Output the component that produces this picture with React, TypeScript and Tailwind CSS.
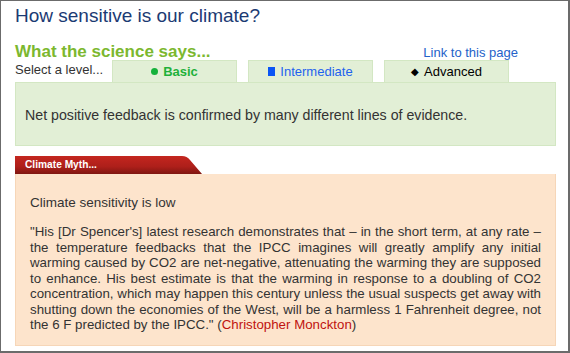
import React from 'react';

/* ===============================
    Level tabs
================================ */
function LevelTab({ children }: { children: React.ReactNode }) {
  return (
    <div className="flex h-[22px] w-[125px] items-center justify-center border border-b-0 border-[#d3e7c3] bg-[#e2efd6] text-[13px]">
      {children}
    </div>
  );
}

/* ===============================
    Red "Climate Myth" banner
================================ */
function MythBanner() {
  return (
    <div className="relative h-[18px] w-[187px]">
      <svg
        className="absolute inset-0"
        width="187"
        height="18"
        viewBox="0 0 187 18"
      >
        <defs>
          <linearGradient id="myth" x1="0" y1="0" x2="0" y2="1">
            <stop offset="0" stopColor="#c4261f" />
            <stop offset="0.6" stopColor="#ad1f1a" />
            <stop offset="1" stopColor="#7f1611" />
          </linearGradient>
        </defs>
        <path d="M0 0 H167 Q172 0 175 4 L187 18 H0 Z" fill="url(#myth)" />
      </svg>
      <span className="relative block pl-[10px] text-[10.2px] leading-[18px] font-bold text-white">
        Climate Myth...
      </span>
    </div>
  );
}

export default function App() {
  return (
    <div className="h-[353px] w-[570px] overflow-hidden border-t border-l border-r-2 border-b-2 border-[#6b6b6b] bg-white px-[14px] font-['Liberation_Sans',Arial,sans-serif] text-[#333]">
      {/* Title */}
      <h1 className="pt-[4px] text-[19px] leading-[22px] text-[#1b3a73]">
        How sensitive is our climate?
      </h1>

      {/* Science header */}
      <div className="mt-[15px] flex items-end justify-between pr-[36px]">
        <h2 className="text-[17px] leading-[20px] font-bold text-[#7cb82f]">
          What the science says...
        </h2>
        <a className="mb-[1px] text-[13px] leading-[16px] text-[#2462c9]">
          Link to this page
        </a>
      </div>

      {/* Level selector */}
      <div className="-mt-[2px] flex items-end">
        <div className="w-[97px] pb-[4px] text-[13px] leading-[16px] text-[#333]">
          Select a level...
        </div>
        <div className="flex gap-[11px]">
          <LevelTab>
            <span className="mr-[5px] inline-block h-[7px] w-[7px] rounded-full bg-[#15b13b]" />
            <span className="font-bold text-[#1fb13a]">Basic</span>
          </LevelTab>
          <LevelTab>
            <span className="mr-[5px] inline-block h-[9px] w-[7px] bg-[#0a55f5]" />
            <span className="text-[#1d62ee]">Intermediate</span>
          </LevelTab>
          <LevelTab>
            <span className="mr-[5px] text-[10px] leading-none text-black">◆</span>
            <span className="text-black">Advanced</span>
          </LevelTab>
        </div>
      </div>

      {/* Basic answer */}
      <div className="flex h-[64px] w-[541px] items-center border border-[#d3e7c3] bg-[#e2efd6] px-[9px] pt-[1px]">
        <p className="text-[14.2px] leading-[16px] text-[#333]">
          Net positive feedback is confirmed by many different lines of evidence.
        </p>
      </div>

      {/* Myth */}
      <div className="mt-[10px]">
        <MythBanner />
        <div className="h-[172px] w-[541px] border border-t-0 border-[#f6d6b8] bg-[#fde4cc] pt-[21px] pr-[14px] pl-[14px]">
          <p className="text-[13.5px] leading-[16px] text-[#333]">
            Climate sensitivity is low
          </p>
          <p className="mt-[13px] text-justify text-[13.3px] leading-[15.5px] text-[#333]">
            "His [Dr Spencer's] latest research demonstrates that – in the short
            term, at any rate – the temperature feedbacks that the IPCC imagines
            will greatly amplify any initial warming caused by CO2 are
            net-negative, attenuating the warming they are supposed to enhance.
            His best estimate is that the warming in response to a doubling of
            CO2 concentration, which may happen this century unless the usual
            suspects get away with shutting down the economies of the West, will
            be a harmless 1 Fahrenheit degree, not the 6 F predicted by the
            IPCC." (<span className="text-[#c0120f]">Christopher Monckton</span>)
          </p>
        </div>
      </div>
    </div>
  );
}
